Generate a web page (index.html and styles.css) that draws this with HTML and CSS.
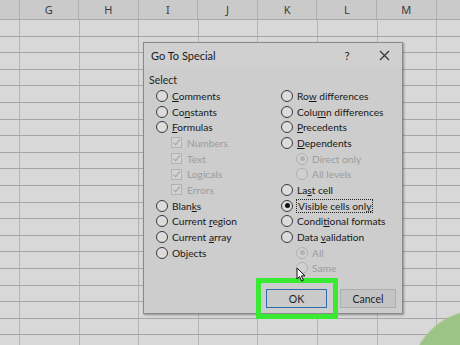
FILE: index.html
```html
<!DOCTYPE html>
<html>
<head>
<meta charset="utf-8">
<link rel="stylesheet" href="styles.css">
</head>
<body>
<div class="sheet">
  <div class="colhead">
    <div class="hc edge"></div>
    <div class="hc">G</div>
    <div class="hc">H</div>
    <div class="hc">I</div>
    <div class="hc">J</div>
    <div class="hc">K</div>
    <div class="hc">L</div>
    <div class="hc">M</div>
    <div class="hc rest"></div>
  </div>
  <div class="cells"></div>
</div>

<div class="dialog">
  <div class="titlebar">
    <span class="title">Go To Special</span>
    <span class="help">?</span>
    <span class="close"><svg width="11" height="11" viewBox="0 0 11 11"><path d="M1 1 L10 10 M10 1 L1 10" stroke="#333" stroke-width="1.2" fill="none"/></svg></span>
  </div>
  <div class="select">Select</div>
  <div class="opts">
    <div class="col">
      <div class="row"><span class="radio"></span><span><u>C</u>omments</span></div>
      <div class="row"><span class="radio"></span><span>Co<u>n</u>stants</span></div>
      <div class="row"><span class="radio"></span><span><u>F</u>ormulas</span></div>
      <div class="row sub dis"><span class="check"><svg width="9" height="9" viewBox="0 0 9 9"><path d="M1.5 4.5 L3.5 6.8 L7.8 1.5" stroke="#a8a8a8" stroke-width="1.2" fill="none"/></svg></span><span>Numbers</span></div>
      <div class="row sub dis"><span class="check"><svg width="9" height="9" viewBox="0 0 9 9"><path d="M1.5 4.5 L3.5 6.8 L7.8 1.5" stroke="#a8a8a8" stroke-width="1.2" fill="none"/></svg></span><span>Text</span></div>
      <div class="row sub dis"><span class="check"><svg width="9" height="9" viewBox="0 0 9 9"><path d="M1.5 4.5 L3.5 6.8 L7.8 1.5" stroke="#a8a8a8" stroke-width="1.2" fill="none"/></svg></span><span>Logicals</span></div>
      <div class="row sub dis"><span class="check"><svg width="9" height="9" viewBox="0 0 9 9"><path d="M1.5 4.5 L3.5 6.8 L7.8 1.5" stroke="#a8a8a8" stroke-width="1.2" fill="none"/></svg></span><span>Errors</span></div>
      <div class="row"><span class="radio"></span><span>Blan<u>k</u>s</span></div>
      <div class="row"><span class="radio"></span><span>Current <u>r</u>egion</span></div>
      <div class="row"><span class="radio"></span><span>Current <u>a</u>rray</span></div>
      <div class="row"><span class="radio"></span><span>Ob<u>j</u>ects</span></div>
    </div>
    <div class="col">
      <div class="row"><span class="radio"></span><span>Ro<u>w</u> differences</span></div>
      <div class="row"><span class="radio"></span><span>Colu<u>m</u>n differences</span></div>
      <div class="row"><span class="radio"></span><span><u>P</u>recedents</span></div>
      <div class="row"><span class="radio"></span><span><u>D</u>ependents</span></div>
      <div class="row sub dis"><span class="radio dot"></span><span>Direct only</span></div>
      <div class="row sub dis"><span class="radio"></span><span>All levels</span></div>
      <div class="row"><span class="radio"></span><span>La<u>s</u>t cell</span></div>
      <div class="row"><span class="radio on"></span><span class="focus">Visible cells onl<u>y</u></span></div>
      <div class="row"><span class="radio"></span><span>Condi<u>t</u>ional formats</span></div>
      <div class="row"><span class="radio"></span><span>Data <u>v</u>alidation</span></div>
      <div class="row sub dis"><span class="radio dot"></span><span>All</span></div>
      <div class="row sub dis"><span class="radio"></span><span>Same</span></div>
    </div>
  </div>
  <div class="buttons">
    <button class="btn ok">OK</button>
    <button class="btn">Cancel</button>
  </div>
</div>

<div class="highlight"></div>

<svg class="cursor" width="12" height="16" viewBox="0 0 12 16"><path d="M1 1 L1 12 L3.6 9.6 L5.6 14 L7.4 13.2 L5.4 8.9 L9 8.9 Z" fill="#fff" stroke="#111" stroke-width="1"/></svg>
</body>
</html>
```
FILE: styles.css
```css
html, body {
  margin: 0;
  padding: 0;
}
body {
  width: 460px;
  height: 345px;
  overflow: hidden;
  position: relative;
  background: #d7d7d7;
  font-family: "Lato", "Noto Sans", sans-serif;
  color: #1f1f1f;
}
.sheet {
  width: 460px;
  height: 345px;
  display: flex;
  flex-direction: column;
}
.colhead {
  height: 20px;
  display: flex;
  background: #cacaca;
  border-bottom: 1px solid #a9a9a9;
  box-sizing: border-box;
}
.hc {
  width: 59.6px;
  flex: none;
  border-right: 1px solid #b0b0b0;
  box-sizing: border-box;
  display: flex;
  align-items: center;
  justify-content: center;
  font-family: "Noto Sans", sans-serif;
  font-size: 11px;
  color: #3a3a3a;
}
.hc.edge { width: 19.5px; }
.hc.rest { flex: 1; border-right: none; }
.cells {
  flex: 1;
  background-color: #d8d8d8;
  background-image:
    radial-gradient(circle at 480px 360px, #9cc486 0, #9cc486 69px, rgba(156,196,134,0) 71px),
    repeating-linear-gradient(to bottom, transparent 0, transparent 15.6px, #a6a6a6 15.6px, #a6a6a6 16.6px),
    repeating-linear-gradient(to right, #b4b4b4 0, #b4b4b4 1px, transparent 1px, transparent 59.6px);
  background-position: 0 0, 0 0, 18.5px 0;
  background-repeat: no-repeat, repeat, repeat-y;
}
.dialog {
  position: absolute;
  left: 143px;
  top: 42px;
  width: 260px;
  height: 272px;
  box-sizing: border-box;
  background: #cdcdcd;
  border: 1px solid #8a8a8a;
  box-shadow: 1px 1px 2px rgba(0,0,0,0.35);
  display: flex;
  flex-direction: column;
}
.titlebar {
  height: 24px;
  display: flex;
  align-items: center;
  padding-left: 7px;
  background: #d0d0d0;
}
.title {
  font-size: 11px;
  flex: 1;
  color: #1a1a1a;
}
.help {
  font-size: 11.5px;
  width: 20px;
  text-align: center;
  margin-right: 17px;
}
.close {
  width: 20px;
  display: flex;
  justify-content: center;
  margin-right: 8px;
}
.select {
  font-size: 10.5px;
  padding-left: 5px;
  margin-top: 6px;
  height: 14px;
  line-height: 14px;
}
.opts {
  display: flex;
  padding-left: 12px;
  margin-top: 1px;
}
.col { display: flex; flex-direction: column; }
.col:first-child { width: 125px; }
.row {
  height: 15.7px;
  display: flex;
  align-items: center;
  font-size: 10.2px;
  white-space: nowrap;
  color: #181818;
}
.row u { text-decoration-thickness: 1px; text-underline-offset: 1px; }
.row.sub { padding-left: 15px; }
.row.dis { color: #9c9c9c; }
.radio {
  width: 10px;
  height: 10px;
  border: 1px solid #3a3a3a;
  border-radius: 50%;
  background: #dcdcdc;
  margin-right: 4px;
  flex: none;
  position: relative;
}
.row.dis .radio { border-color: #b0b0b0; background: #d0d0d0; }
.radio.on::after, .radio.dot::after {
  content: "";
  position: absolute;
  left: 2.5px;
  top: 2.5px;
  width: 5px;
  height: 5px;
  border-radius: 50%;
  background: #111;
}
.radio.dot::after { background: #b3b3b3; }
.check {
  width: 9px;
  height: 9px;
  border: 1px solid #b2b2b2;
  background: #d3d3d3;
  margin-right: 5px;
  flex: none;
  display: flex;
}
.focus {
  outline: 1px dotted #222;
  outline-offset: 0px;
  padding: 0 1px;
}
.buttons {
  margin-top: auto;
  margin-bottom: 5px;
  display: flex;
  justify-content: flex-end;
  gap: 13px;
  padding-right: 6px;
}
.btn {
  font-family: "Lato", "Noto Sans", sans-serif;
  font-size: 10.5px;
  color: #1f1f1f;
  height: 19px;
  background: #c4c4c4;
  border: 1px solid #adadad;
  padding: 0;
  width: 56px;
}
.btn.ok {
  width: 61px;
  border: 1px solid #2f6db0;
  box-shadow: inset 0 0 0 1px #c9c9c9;
  background: #cacaca;
}
.highlight {
  position: absolute;
  left: 256px;
  top: 278px;
  width: 82px;
  height: 41px;
  box-sizing: border-box;
  border: 5px solid #39ea33;
  border-radius: 1px;
}
.cursor {
  position: absolute;
  left: 296px;
  top: 267px;
}
```
